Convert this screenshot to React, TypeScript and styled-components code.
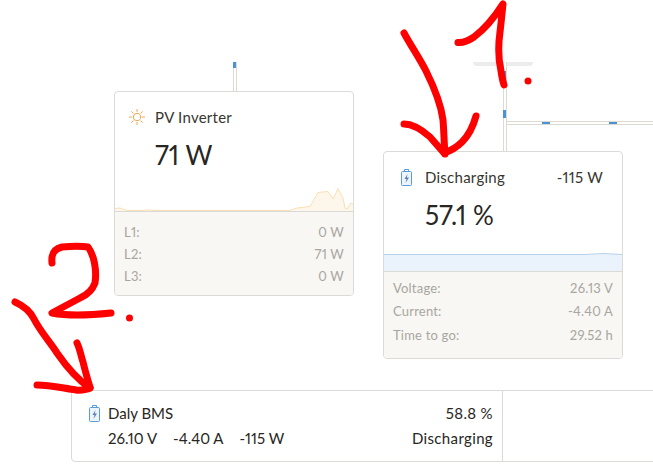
import React from "react";
import styled, { createGlobalStyle } from "styled-components";

const Global = createGlobalStyle`
  html, body { margin: 0; padding: 0; background: #fff; }
  body {
    font-family: "Lato", "Open Sans", sans-serif;
    font-variant-numeric: proportional-nums;
    color: #272622;
  }
`;

const Canvas = styled.div`
  position: relative;
  width: 653px;
  height: 474px;
  overflow: hidden;
  background: #fff;
`;

const Conduit = styled.div<{ $x: number; $y: number; $len: number; $horizontal?: boolean }>`
  position: absolute;
  left: ${(p) => p.$x}px;
  top: ${(p) => p.$y}px;
  box-sizing: border-box;
  width: ${(p) => (p.$horizontal ? `${p.$len}px` : "4px")};
  height: ${(p) => (p.$horizontal ? "4px" : `${p.$len}px`)};
  background: #fff;
  border-style: solid;
  border-color: #dcdad3;
  border-width: ${(p) => (p.$horizontal ? "1px 0" : "0 1px")};
`;

const Pulse = styled.div<{ $x: number; $y: number; $w: number; $h: number }>`
  position: absolute;
  left: ${(p) => p.$x}px;
  top: ${(p) => p.$y}px;
  width: ${(p) => p.$w}px;
  height: ${(p) => p.$h}px;
  background: #4a94d6;
`;

const Shelf = styled.div`
  position: absolute;
  left: 473px;
  top: 62px;
  width: 60px;
  height: 4px;
  background: #ececec;
  border-radius: 0 0 4px 4px;
`;

const Card = styled.section<{ $x: number; $y: number; $w: number; $h: number }>`
  position: absolute;
  left: ${(p) => p.$x}px;
  top: ${(p) => p.$y}px;
  width: ${(p) => p.$w}px;
  height: ${(p) => p.$h}px;
  box-sizing: border-box;
  display: flex;
  flex-direction: column;
  background: #fff;
  border: 1px solid #dcdad6;
  border-radius: 4px;
  overflow: hidden;
`;

const CardTop = styled.div<{ $height: number }>`
  position: relative;
  height: ${(p) => p.$height}px;
  flex: none;
`;

const Header = styled.div<{ $pad: string; $gap: number }>`
  display: flex;
  align-items: center;
  gap: ${(p) => p.$gap}px;
  padding: ${(p) => p.$pad};
  font-size: 15px;
  letter-spacing: 0.25px;
  line-height: 18px;
  color: #37352f;
`;

const Title = styled.span`
  flex: 1;
`;

const Reading = styled.div<{ $left: number; $top: number }>`
  margin: ${(p) => p.$top}px 0 0 ${(p) => p.$left}px;
  font-size: 26px;
  line-height: 32px;
  color: #272622;
`;

const Chart = styled.svg`
  position: absolute;
  left: 0;
  bottom: 0;
  display: block;
`;

const Details = styled.div<{ $top: number; $line: number }>`
  flex: 1;
  background: #f9f7f3;
  border-top: 1px solid #dcdad6;
  padding: ${(p) => p.$top}px 9px 0 9px;
  display: flex;
  flex-direction: column;
  line-height: ${(p) => p.$line}px;
`;

const DetailRow = styled.div`
  display: flex;
  justify-content: space-between;
  font-size: 13px;
  letter-spacing: 0.2px;
  color: #a8a6a1;
`;

const Bar = styled.section`
  position: absolute;
  left: 71px;
  top: 390px;
  width: 600px;
  height: 72px;
  box-sizing: border-box;
  display: flex;
  background: #fff;
  border: 1px solid #dcdad6;
  border-radius: 4px;
`;

const BarDevice = styled.div`
  width: 431px;
  flex: none;
  box-sizing: border-box;
  border-right: 1px solid #dcdad6;
  padding: 10px 9px 0 17px;
  font-size: 15px;
  line-height: 25px;
  color: #272622;
  display: flex;
  justify-content: space-between;
`;

const BarLeft = styled.div`
  display: flex;
  flex-direction: column;
`;

const BarName = styled.div`
  display: flex;
  align-items: center;
  gap: 7px;
`;

const BarValues = styled.div`
  display: flex;
  gap: 16px;
  padding-left: 19px;
`;

const BarRight = styled.div`
  display: flex;
  flex-direction: column;
  align-items: flex-end;
  letter-spacing: 0.35px;
`;

const Ink = styled.svg`
  position: absolute;
  left: 0;
  top: 0;
  pointer-events: none;
`;

const SunIcon = () => (
  <svg width="18" height="18" viewBox="0 0 18 18" fill="none" stroke="#f0a44c" strokeWidth="1" strokeLinecap="round">
    <circle cx="9" cy="9" r="3.7" />
    <path d="M9 1.500v2M9 14.500v2M1.500 9h2M14.500 9h2M3.700 3.700l1.400 1.400M12.900 12.900l1.400 1.400M3.700 14.300l1.400-1.400M12.900 5.100l1.400-1.400" />
  </svg>
);

const BatteryIcon = () => (
  <svg width="12" height="17" viewBox="0 0 12 17" fill="none">
    <rect x="0.5" y="2.5" width="10" height="14" rx="1" fill="#edf4fb" stroke="#5a9cd8" />
    <path d="M3.500 .5h4v2h-4z" stroke="#5a9cd8" />
    <path d="M6.500 5 3.500 10H5.500L4.500 14 8 8.500H5.800z" fill="#5b7fc0" />
  </svg>
);

const Scribble = () => (
  <Ink width="653" height="474" viewBox="0 0 653 474" fill="none" stroke="#fe0000" strokeWidth="7" strokeLinecap="round" strokeLinejoin="round">
    <path d="M458 42.500C463 43 468 41 474 37C486 28 494 18 503 4C502 14 501 24 500 32C498 46 499 62 501 71C502 78 503 82 504 85" />
    <path d="M404 33C411 46 420 59 426 71C435 89 441 105 443 120C444 132 444 142 445 154" />
    <path d="M404 124C413 124 421 129 430 137L444 153C450 151 457 147 462 142C469 135 473 127 476 116" />
    <path d="M52 263C51 254 54 249 62 247C72 246 82 246 88 247C94 255 97 270 95 283C92 291 87 295 80 298L52 313C68 316 92 315 111 313" />
    <path d="M15 302C24 306 30 311 34 319C40 331 50 342 57 353C66 366 78 380 90 388C92 388 82 391 76 390C62 388 50 385 37 385" />
    <path d="M77 343C80 349 81 356 83 362C85 370 87 378 90 387" />
    <circle cx="528" cy="81" r="3.5" fill="#fe0000" stroke="none" />
    <circle cx="129.500" cy="318" r="3.5" fill="#fe0000" stroke="none" />
  </Ink>
);

export default function App() {
  return (
    <Canvas>
      <Global />
      <Conduit $x={233} $y={62} $len={30} />
      <Pulse $x={233} $y={62} $w={3} $h={6} />

      <Shelf />
      <Conduit $x={503} $y={62} $len={90} />
      <Conduit $x={507} $y={121} $len={146} $horizontal />
      <Pulse $x={503} $y={71} $w={3} $h={9} />
      <Pulse $x={503} $y={110} $w={3} $h={8} />
      <Pulse $x={542} $y={122} $w={8} $h={2} />
      <Pulse $x={609} $y={122} $w={8} $h={2} />

      <Card $x={114} $y={91} $w={240} $h={205}>
        <CardTop $height={119}>
          <Header $pad="16px 14px 0 13px" $gap={9}>
            <SunIcon />
            <Title>PV Inverter</Title>
          </Header>
          <Reading $left={40} $top={13}>71 W</Reading>
          <Chart width="238" height="40" viewBox="0 0 238 40">
            <path
              d="M0 37.500L5 37L12 39.500L28 39.500L35 38.800L37 39.500L175 39.500L182 37L195 35.500L203 21.500L213 20.500L218 28L223 17.500L228 27L230 37L232 38L236 32L238 33V40H0Z"
              fill="#fdf6ea"
            />
            <path
              d="M0 37.500L5 37L12 39.500L28 39.500L35 38.800L37 39.500L175 39.500L182 37L195 35.500L203 21.500L213 20.500L218 28L223 17.500L228 27L230 37L232 38L236 32L238 33"
              stroke="#fbdfb4"
              fill="none"
            />
          </Chart>
        </CardTop>
        <Details $top={9} $line={22}>
          <DetailRow><span>L1:</span><span>0 W</span></DetailRow>
          <DetailRow><span>L2:</span><span>71 W</span></DetailRow>
          <DetailRow><span>L3:</span><span>0 W</span></DetailRow>
        </Details>
      </Card>

      <Card $x={383} $y={151} $w={240} $h={208}>
        <CardTop $height={119}>
          <Header $pad="16px 19px 0 17px" $gap={12}>
            <BatteryIcon />
            <Title>Discharging</Title>
            <span>-115 W</span>
          </Header>
          <Reading $left={41} $top={13}>57.1 %</Reading>
          <Chart width="238" height="18" viewBox="0 0 238 18">
            <path d="M0 1.500H200L220 .5L238 1.500V18H0Z" fill="#eaf2fb" />
            <path d="M0 1.500H200L220 .5L238 1.500" stroke="#b4d2ec" fill="none" />
          </Chart>
        </CardTop>
        <Details $top={5} $line={23.3}>
          <DetailRow><span>Voltage:</span><span>26.13 V</span></DetailRow>
          <DetailRow><span>Current:</span><span>-4.40 A</span></DetailRow>
          <DetailRow><span>Time to go:</span><span>29.52 h</span></DetailRow>
        </Details>
      </Card>

      <Bar>
        <BarDevice>
          <BarLeft>
            <BarName>
              <BatteryIcon />
              <span>Daly BMS</span>
            </BarName>
            <BarValues>
              <span>26.10 V</span>
              <span>-4.40 A</span>
              <span>-115 W</span>
            </BarValues>
          </BarLeft>
          <BarRight>
            <span>58.8 %</span>
            <span>Discharging</span>
          </BarRight>
        </BarDevice>
      </Bar>

      <Scribble />
    </Canvas>
  );
}
